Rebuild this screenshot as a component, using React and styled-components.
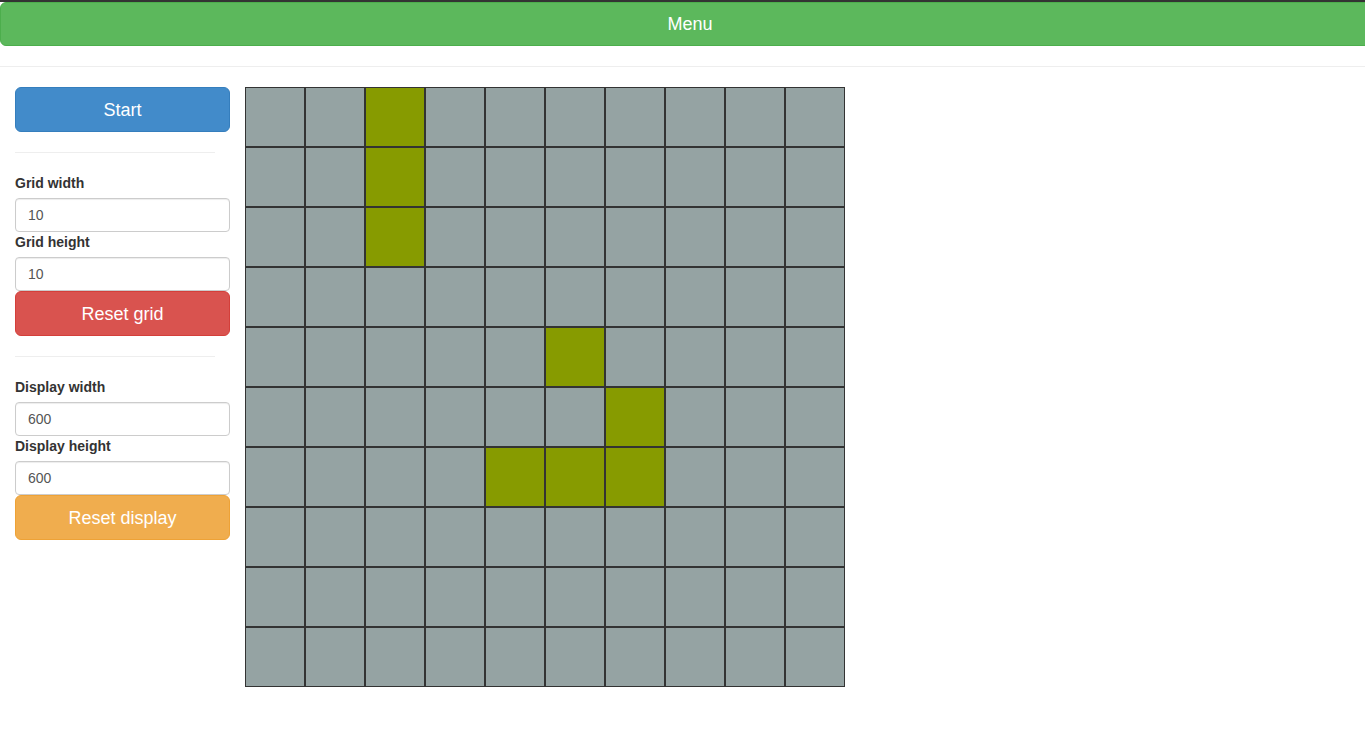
import React from 'react';
import styled, { createGlobalStyle } from 'styled-components';

const GlobalStyle = createGlobalStyle`
  * { box-sizing: border-box; }
  body {
    margin: 0;
    font-family: "Liberation Sans", Arial, sans-serif;
    font-size: 14px;
    color: #333;
    background: #fff;
    overflow-x: hidden;
  }
`;

const TopStrip = styled.div`
  height: 2px;
  background: #333;
`;

const MenuBar = styled.button`
  display: block;
  width: calc(100% + 15px);
  height: 44px;
  margin: 0;
  padding: 0 16px;
  background: #5cb85c;
  border: 1px solid #4cae4c;
  border-radius: 6px;
  color: #fff;
  font-family: inherit;
  font-size: 18px;
  line-height: 42px;
  text-align: center;
`;

const Rule = styled.hr`
  border: 0;
  border-top: 1px solid #eee;
  margin: ${(p) => p.$margin || '20px 0'};
  width: ${(p) => p.$width || 'auto'};
`;

const Main = styled.div`
  display: flex;
  align-items: flex-start;
  gap: 15px;
  padding: 0 15px;
`;

const Sidebar = styled.div`
  width: 215px;
  display: flex;
  flex-direction: column;
`;

const BigButton = styled.button`
  display: block;
  width: 100%;
  height: 45px;
  padding: 2px 16px 0;
  border-radius: 6px;
  font-family: inherit;
  font-size: 18px;
  color: #fff;
  background: ${(p) => p.$bg};
  border: 1px solid ${(p) => p.$border};
`;

const Label = styled.label`
  display: block;
  font-weight: bold;
  line-height: 20px;
  margin-bottom: 5px;
`;

const Input = styled.input`
  display: block;
  width: 100%;
  height: 34px;
  padding: 6px 12px;
  font-family: inherit;
  font-size: 14px;
  color: #555;
  border: 1px solid #ccc;
  border-radius: 4px;
  background: #fff;
  box-shadow: inset 0 1px 1px rgba(0, 0, 0, 0.075);
`;

const Board = styled.div`
  display: grid;
  grid-template-columns: repeat(10, 60px);
  grid-auto-rows: 60px;
`;

const Cell = styled.div`
  border: 1px solid #333;
  background: ${(p) => (p.$alive ? '#879b00' : '#95a3a3')};
`;

const alive = new Set(['0-2', '1-2', '2-2', '4-5', '5-6', '6-4', '6-5', '6-6']);

function Field({ label, value }) {
  return (
    <>
      <Label>{label}</Label>
      <Input type="text" defaultValue={value} />
    </>
  );
}

export default function App() {
  const cells = [];
  for (let r = 0; r < 10; r++) {
    for (let c = 0; c < 10; c++) {
      cells.push(<Cell key={`${r}-${c}`} $alive={alive.has(`${r}-${c}`)} />);
    }
  }

  return (
    <>
      <GlobalStyle />
      <TopStrip />
      <MenuBar>Menu</MenuBar>
      <Rule />
      <Main>
        <Sidebar>
          <BigButton $bg="#428bca" $border="#357ebd">Start</BigButton>
          <Rule $width="200px" />
          <Field label="Grid width" value="10" />
          <Field label="Grid height" value="10" />
          <BigButton $bg="#d9534f" $border="#d43f3a">Reset grid</BigButton>
          <Rule $width="200px" />
          <Field label="Display width" value="600" />
          <Field label="Display height" value="600" />
          <BigButton $bg="#f0ad4e" $border="#eea236">Reset display</BigButton>
        </Sidebar>
        <Board>{cells}</Board>
      </Main>
    </>
  );
}
